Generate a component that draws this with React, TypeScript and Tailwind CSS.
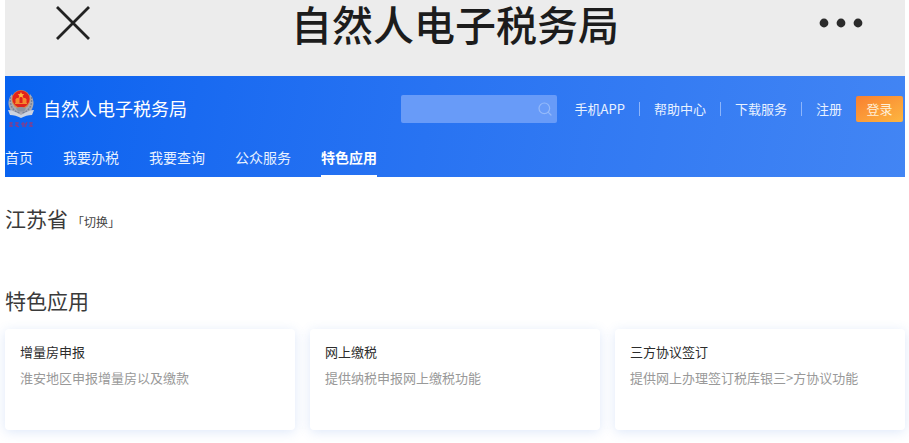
import { Search } from "lucide-react";

const NAV_ITEMS = ["首页", "我要办税", "我要查询", "公众服务", "特色应用"];
const ACTIVE_NAV = "特色应用";

const QUICK_LINKS = ["手机APP", "帮助中心", "下载服务", "注册"];

const APPS = [
  { title: "增量房申报", text: "淮安地区申报增量房以及缴款" },
  { title: "网上缴税", text: "提供纳税申报网上缴税功能" },
  { title: "三方协议签订", text: "提供网上办理签订税库银三>方协议功能" },
];

// ─── Tax emblem ──────────────────────────────────────────────────────────────
function Emblem() {
  return (
    <svg viewBox="0 2 28 38" className="w-7 h-[38px] shrink-0" fill="none" aria-hidden>
      {/* grey wreath */}
      <path d="M5 6C0 12 0 20 7 26l7 3 7-3c7-6 7-14 2-20l-3 12H8z" fill="#a9a9b2" />
      <path d="M3.5 9c-1 8 2 14 9 16M24.5 9c1 8-2 14-9 16" stroke="#77829a" strokeWidth="1.4" strokeDasharray="2 1" />
      {/* ribbon */}
      <path d="M1 22c4 0 8 2 13 5 5-3 9-5 13-5l-2 5c-4 0-7 1-11 3-4-2-7-3-11-3z" fill="#cbd3e0" />
      {/* red disc */}
      <circle cx="14" cy="11.5" r="9.4" fill="#d98a4a" />
      <circle cx="14" cy="11" r="8.6" fill="#e2231b" />
      <path d="M14 4l1 2 2.3.2-1.7 1.5.5 2.2-2.1-1.2-2.1 1.2.5-2.2-1.7-1.5 2.3-.2z" fill="#ffb53a" />
      <path d="M9 11l3-1v5H9zM16 10l3 1v4h-3zM8 15.500h12" fill="#f58a2e" stroke="#f58a2e" />
      <path d="M9 20.5c3-2 7-2 10 0l-2 3h-6z" fill="#8f939e" />
      {/* lettering under the badge */}
      <path
        d="M2 35h4M4 34v5M2 38h4M8 35h4M10 34v5M8 37l4 2M16 34v5M14 36h5M20 34l-2 5M22 35h4M24 34v5M22 38h4"
        stroke="#8a3c86"
        strokeWidth="1.2"
      />
    </svg>
  );
}

// ─── Browser title bar ───────────────────────────────────────────────────────
function TitleBar() {
  return (
    <div className="pb-[30px] flex items-center justify-between pl-[50px] pr-[42px] bg-[#ececec] text-[#1c1c1c]">
      <button type="button" aria-label="关闭" className="w-9 h-[46px] flex items-center">
        <svg viewBox="0 0 36 36" className="size-9" fill="none" stroke="#222" strokeWidth="2.8" aria-hidden>
          <path d="M2 2l32 32M34 2L2 34" />
        </svg>
      </button>
      <h1 className="text-[41px] leading-[44px] font-medium">自然人电子税务局</h1>
      <button type="button" aria-label="更多" className="w-11 h-[46px] flex items-center">
        <svg viewBox="0 0 44 10" className="w-11 h-[10px]" fill="#2b2b2b" aria-hidden>
          <circle cx="5" cy="5" r="4.4" />
          <circle cx="22" cy="5" r="4.4" />
          <circle cx="39" cy="5" r="4.4" />
        </svg>
      </button>
    </div>
  );
}

// ─── Site header ─────────────────────────────────────────────────────────────
function SiteHeader() {
  return (
    <header className="bg-linear-100 from-[#0762f0] to-[#4285f4] text-white">
      <div className="h-[65px] flex items-center justify-between px-[2px]">
        <a href="#home" className="flex items-center gap-2">
          <Emblem />
          <span className="text-[18px]">自然人电子税务局</span>
        </a>
        <div className="flex items-center gap-[14px]">
          <form onSubmit={(e) => e.preventDefault()} className="flex items-center w-[156px] h-7 mr-1 pr-1 rounded-xs bg-[#689bf8]">
            <input type="search" aria-label="搜索" className="flex-1 min-w-0 h-full px-2 text-[13px] outline-none" />
            <button type="submit" aria-label="搜索">
              <Search size={16} strokeWidth={1.8} color="#94b9fa" />
            </button>
          </form>
          <nav className="flex items-center text-[13px] text-[#e8f1ff]">
            {QUICK_LINKS.map((label, i) => (
              <div key={label} className="flex items-center">
                {i > 0 && <span className="w-px h-[14px] mx-[14px] bg-[#8db5fb]" />}
                <a href="#link">{label}</a>
              </div>
            ))}
          </nav>
          <button
            type="button"
            className="w-[47px] h-[26px] rounded-xs text-[13px] text-[#fff0d8] bg-gradient-to-br from-[#f87f30] to-[#fdb640]"
          >
            登录
          </button>
        </div>
      </div>
      <nav className="h-9 flex gap-[30px] text-[14px] text-[#e8f1ff]">
        {NAV_ITEMS.map((label) => (
          <a
            key={label}
            href="#nav"
            className={
              label === ACTIVE_NAV
                ? "leading-[32px] font-bold text-white border-b-2 border-white"
                : "leading-[32px]"
            }
          >
            {label}
          </a>
        ))}
      </nav>
    </header>
  );
}

export default function App() {
  return (
    <div className="pl-[5px] pr-1 bg-white font-['Noto_Sans_CJK_SC',sans-serif] overflow-hidden">
      <TitleBar />
      <SiteHeader />
      <main className="text-[#3a3a3a]">
        <div className="flex items-baseline gap-1 pt-[25px]">
          <h2 className="text-[21px] leading-8">江苏省</h2>
          <button type="button" className="text-[12px] text-[#444]">「切换」</button>
        </div>
        <h2 className="mt-[50px] text-[21px] leading-8">特色应用</h2>
        <div className="mt-[13px] pb-3 grid grid-cols-3 gap-[15px]">
          {APPS.map((app) => (
            <a
              key={app.title}
              href="#app"
              className="h-[101px] px-[15px] pt-[13px] rounded-sm bg-white shadow-[0_2px_12px_rgba(70,130,220,0.18)]"
            >
              <h3 className="text-[13px] leading-5 text-[#2c2c2c]">{app.title}</h3>
              <p className="mt-[6px] text-[13px] leading-5 text-[#999]">{app.text}</p>
            </a>
          ))}
        </div>
      </main>
    </div>
  );
}
